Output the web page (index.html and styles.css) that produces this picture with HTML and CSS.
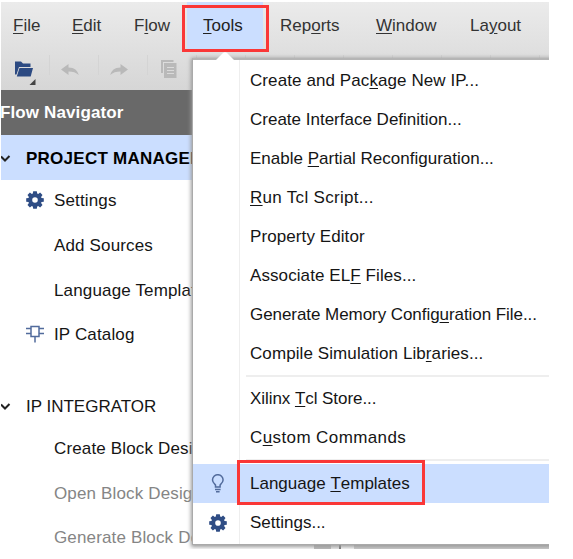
FILE: index.html
```html
<!DOCTYPE html>
<html lang="en">
<head>
<meta charset="utf-8">
<title>Flow Navigator</title>
<link rel="stylesheet" href="styles.css">
</head>
<body>
<svg width="0" height="0" class="defs">
  <symbol id="gear" viewBox="0 0 18 18">
    <path fill-rule="evenodd" d="M7.200 0.300h3.600l.4 2.300 1 .4 1.900-1.400 2.400 2.400-1.400 1.900.4 1 2.300.4v3.400l-2.300.4-.4 1 1.400 1.900-2.400 2.400-1.900-1.400-1 .4-.4 2.300H7.200l-.4-2.300-1-.4-1.900 1.400-2.400-2.400 1.400-1.900-.4-1-2.300-.4V7.300l2.300-.4.400-1L1.500 4l2.400-2.400L5.800 3l1-.4zM9 6.200a2.800 2.800 0 1 0 0 5.600a2.800 2.800 0 0 0 0-5.600z"/>
  </symbol>
</svg>
<div class="window">
  <nav class="menubar">
    <span class="m-file"><u>F</u>ile</span>
    <span class="m-edit"><u>E</u>dit</span>
    <span class="m-flow">F<u>l</u>ow</span>
    <span class="m-tools"><u>T</u>ools</span>
    <span class="m-reports">Rep<u>o</u>rts</span>
    <span class="m-window"><u>W</u>indow</span>
    <span class="m-layout">La<u>y</u>out</span>
  </nav>
  <div class="toolbar">
    <svg class="open" width="23" height="26" viewBox="0 0 23 26"><path fill="#2c4a82" d="M1 1.500h6l2 2h7.500v3.500H5L2.500 14.500H1zM5.500 8H19l-2.300 8.500H2.800z"/><path fill="#444" d="M21.500 19v6h-6z"/></svg>
    <svg class="undo" width="18" height="12" viewBox="0 0 18 12"><path d="M0 5.500 7.500 0v3.500c6 0 9 3 10.300 7.500C15 8.500 12 7.500 7.500 7.500V11z"/></svg>
    <svg class="redo" width="18" height="12" viewBox="0 0 18 12"><path d="M18 5.500 10.500 0v3.500C4.500 3.500 1.500 6.500.2 11 3 8.500 6 7.500 10.500 7.500V11z"/></svg>
    <svg class="copy" width="16" height="18" viewBox="0 0 16 18"><path d="M0 0h12.500v2H2v11H0z"/><path fill-rule="evenodd" d="M3 3h12.500v15H3zM6 7v1h7V7zm0 3v1h7v-1zm0 3v1h7v-1z"/></svg>
  </div>
  <aside class="navigator">
    <header>Flow Navigator</header>
    <div class="group selected"><svg width="10" height="8" viewBox="0 0 10 8"><path d="M0 1.500 4 5.500 8.500 1"/></svg>PROJECT MANAGER</div>
    <ul>
      <li><svg class="gear" width="18" height="18"><use href="#gear"/></svg>Settings</li>
      <li>Add Sources</li>
      <li>Language Templates</li>
      <li><svg class="chip" width="18" height="18" viewBox="0 0 18 18"><path d="M5 1.500h8v10H5zM0 3.500h5M0 8.500h5M13 3.500h5M13 8.500h5M9 12v5.500"/></svg>IP Catalog</li>
    </ul>
    <div class="group integrator"><svg width="10" height="8" viewBox="0 0 10 8"><path d="M0 1.500 4 5.500 8.500 1"/></svg>IP INTEGRATOR</div>
    <ul>
      <li>Create Block Design</li>
      <li class="off">Open Block Design</li>
      <li class="off">Generate Block Design</li>
    </ul>
  </aside>
  <div class="scroll-end"></div>
  <div class="dropdown">
    <svg class="pointer" width="18" height="8" viewBox="0 0 18 8"><path d="M0 8 6.500 1.500Q9-1 11.500 1.500L18 8z"/></svg>
    <div class="item wide">Create and Pac<u>k</u>age New IP...</div>
    <div class="item">Create Interface Definition...</div>
    <div class="item">Enable <u>P</u>artial Reconfiguration...</div>
    <div class="item wider"><u>R</u>un Tcl Script...</div>
    <div class="item wide">Property Editor</div>
    <div class="item wide">Associate EL<u>F</u> Files...</div>
    <div class="item tight">Generate Memory Config<u>u</u>ration File...</div>
    <div class="item wide">Compile Simulation Lib<u>r</u>aries...</div>
    <hr>
    <div class="item tight">Xilinx <u>T</u>cl Store...</div>
    <div class="item widest">C<u>u</u>stom Commands</div>
    <hr class="low">
    <div class="item active"><svg class="bulb" width="14" height="19" viewBox="0 0 14 19"><path d="M4.500 13v-2C3 9.500 1.500 8.200 1.500 6a5.300 5.300 0 0 1 10.600 0c0 2.200-1.500 3.500-3 5v2zM4 15.500h5.600M5 17.800h3.600"/></svg>Language <u>T</u>emplates</div>
    <div class="item"><svg class="gear" width="18" height="18"><use href="#gear"/></svg>Settings...</div>
  </div>
</div>
<div class="mark mark-tools"></div>
<div class="mark mark-templates"></div>
</body>
</html>
```
FILE: styles.css
```css
* { box-sizing: border-box; }
body {
  margin: 0;
  width: 573px;
  height: 559px;
  overflow: hidden;
  position: relative;
  background: #fff;
  font: 17px/20px "Liberation Sans", Arial, sans-serif;
  color: #151515;
}
.defs { position: absolute; }
u { text-decoration-thickness: 1px; text-underline-offset: 2px; }
.window {
  position: relative;
  width: 548px;
  height: 547px;
  margin: 2px 0 0 1px;
  overflow: hidden;
  background: linear-gradient(#ebebeb, #d6d6d6 88px, #fff 88px);
}
.menubar { display: flex; height: 48px; color: #333; }
.menubar span { padding-top: 14px; white-space: nowrap; flex: none; }
.m-file { width: 71px; padding-left: 12px; }
.m-edit { width: 62px; }
.m-flow { width: 53px; }
.menubar .m-tools { width: 76px; padding-left: 16px; background: #cbdeff; color: #222; }
.m-reports { width: 113px; padding-left: 17px; }
.m-window { width: 94px; }
.toolbar {
  display: flex;
  height: 40px;
  padding-left: 13px;
  fill: #b9b9b9;
  background: repeating-linear-gradient(90deg, transparent 0 44px, #d3d3d3 44px 45px, transparent 45px 49px) 0 5px / 192px 22px no-repeat;
}
.toolbar { background: linear-gradient(90deg, transparent 48px, #d4d4d4 48px) 0 5px / 49px 20px repeat-x; }
.toolbar svg { flex: none; }
.open { margin: 10px 24px 0 0; }
.undo { margin: 14px 31px 0 0; }
.redo { margin: 14px 33px 0 0; }
.copy { margin-top: 10px; }
.navigator { width: 192px; height: 459px; overflow: hidden; white-space: nowrap; }
.navigator header {
  height: 45px;
  padding-top: 13px;
  margin-left: -1px;
  background: #696969;
  color: #fff;
  font-weight: bold;
  letter-spacing: 0.12px;
}
.group { display: flex; align-items: center; height: 45px; font-size: 17px; }
.group svg { flex: none; margin-right: 15px; }
.group path { fill: none; stroke: #222; stroke-width: 2; }
.selected { padding-top: 3px; background: #cbdeff; font-weight: bold; color: #000; letter-spacing: 0.25px; }
.integrator { height: 44px; margin-top: 26px; }
ul { margin: 0; padding: 0; list-style: none; }
li {
  display: flex;
  align-items: center;
  height: 44.7px;
  padding: 0 0 2px 53px;
  letter-spacing: 0.15px;
}
.integrator + ul { margin-top: -1px; }
li svg { flex: none; margin: -2px 10px 0 -28px; }
.gear { fill: #2f4d85; }
.chip { fill: none; stroke: #526b9c; stroke-width: 1.5; }
.off { color: #858585; }
.scroll-end {
  position: absolute;
  left: 313px;
  top: 539px;
  width: 235px;
  height: 8px;
  background: linear-gradient(90deg, #bbb 17px, #eee 17px 25px, #777 25px 27px, #fff 27px 40px, #ccc 40px);
}
.dropdown {
  position: absolute;
  left: 191px;
  top: 56px;
  width: 370px;
  height: 487px;
  padding-top: 1px;
  border: 1px solid #aaa;
  border-top: 2px solid #b5b5b5;
  background: linear-gradient(90deg, #fff 46px, #eee 46px 47px, #fff 47px);
  box-shadow: 0 1px 4px 1px #999;
}
.pointer { position: absolute; left: 23px; top: -8px; fill: #fff; }
.item {
  display: flex;
  align-items: center;
  height: 39px;
  padding-left: 57px;
  white-space: pre;
}
.wide { letter-spacing: 0.09px; }
.wider { letter-spacing: 0.3px; }
.widest { letter-spacing: 0.4px; }
.tight { letter-spacing: -0.06px; }
.item svg { flex: none; }
.item .gear { margin: 0 23px 0 -41px; }
.item .bulb { margin: 0 25px 0 -39px; fill: none; stroke: #526b9c; stroke-width: 1.5; }
.active { background: #cbdeff; }
hr { height: 2px; margin: 2px 0 2px 53px; border: 0; background: #eee; }
hr.low { margin-bottom: 3px; }
.mark { position: absolute; border: 3px solid #fa3737; }
.mark-tools { left: 182px; top: 5px; width: 87px; height: 47px; }
.mark-templates { left: 237px; top: 460px; width: 188px; height: 45px; }
```
